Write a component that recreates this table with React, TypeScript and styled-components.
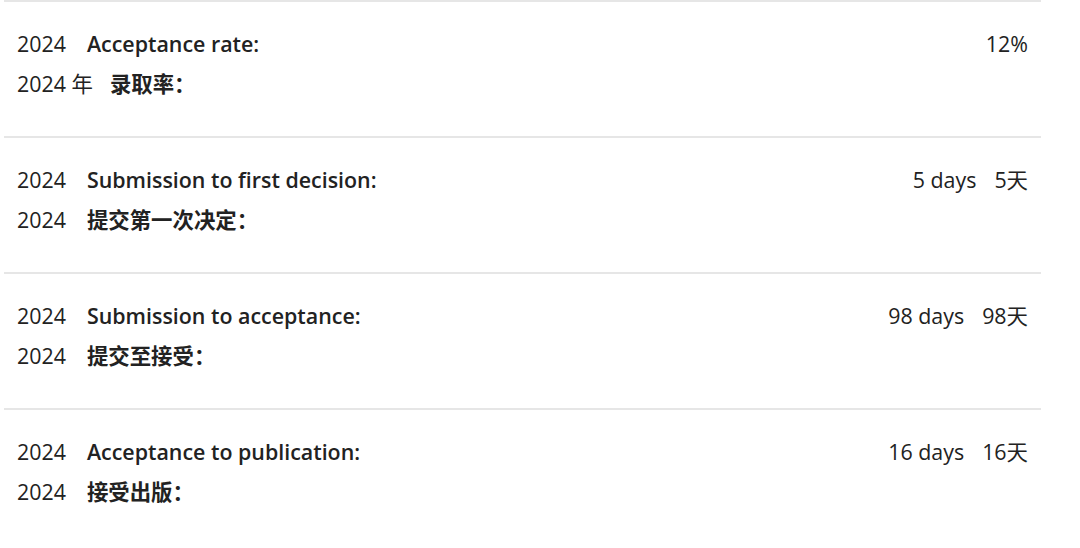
import React from "react";
import styled, { createGlobalStyle } from "styled-components";

const Global = createGlobalStyle`
  html, body { margin: 0; padding: 0; background: #fff; }
  body {
    font-family: "Open Sans", "Noto Sans CJK SC", sans-serif;
    color: #222;
    -webkit-font-smoothing: antialiased;
  }
`;

const Page = styled.div`
  width: 1080px;
  padding-left: 4px;
  box-sizing: border-box;
`;

const List = styled.div`
  width: 1037px;
  display: flex;
  flex-direction: column;
`;

const Section = styled.section`
  border-top: 2px solid #e6e6e6;
  padding: 22px 13px 32px 13px;
  display: flex;
  flex-direction: column;
`;

const Line = styled.div`
  display: flex;
  align-items: center;
  height: 40px;
  font-size: 21.4px;
  line-height: 40px;
`;

const Year = styled.span<{ $gap: number }>`
  margin-right: ${(p) => p.$gap}px;
  font-weight: 400;
`;

const Label = styled.span`
  font-weight: 600;
  flex: 1;
`;

const Value = styled.span`
  display: flex;
  gap: 18px;
  font-weight: 400;
`;

type Item = {
  en: string;
  zhYear: string;
  zhGap: number;
  zh: string;
  values: string[];
};

const items: Item[] = [
  { en: "Acceptance rate:", zhYear: "2024 年", zhGap: 17, zh: "录取率：", values: ["12%"] },
  { en: "Submission to first decision:", zhYear: "2024", zhGap: 21, zh: "提交第一次决定：", values: ["5 days", "5天"] },
  { en: "Submission to acceptance:", zhYear: "2024", zhGap: 21, zh: "提交至接受：", values: ["98 days", "98天"] },
  { en: "Acceptance to publication:", zhYear: "2024", zhGap: 21, zh: "接受出版：", values: ["16 days", "16天"] },
];

export default function App() {
  return (
    <>
      <Global />
      <Page>
        <List>
          {items.map((it) => (
            <Section key={it.en}>
              <Line>
                <Year $gap={21}>2024</Year>
                <Label>{it.en}</Label>
                <Value>
                  {it.values.map((v) => (
                    <span key={v}>{v}</span>
                  ))}
                </Value>
              </Line>
              <Line>
                <Year $gap={it.zhGap}>{it.zhYear}</Year>
                <Label>{it.zh}</Label>
              </Line>
            </Section>
          ))}
        </List>
      </Page>
    </>
  );
}
